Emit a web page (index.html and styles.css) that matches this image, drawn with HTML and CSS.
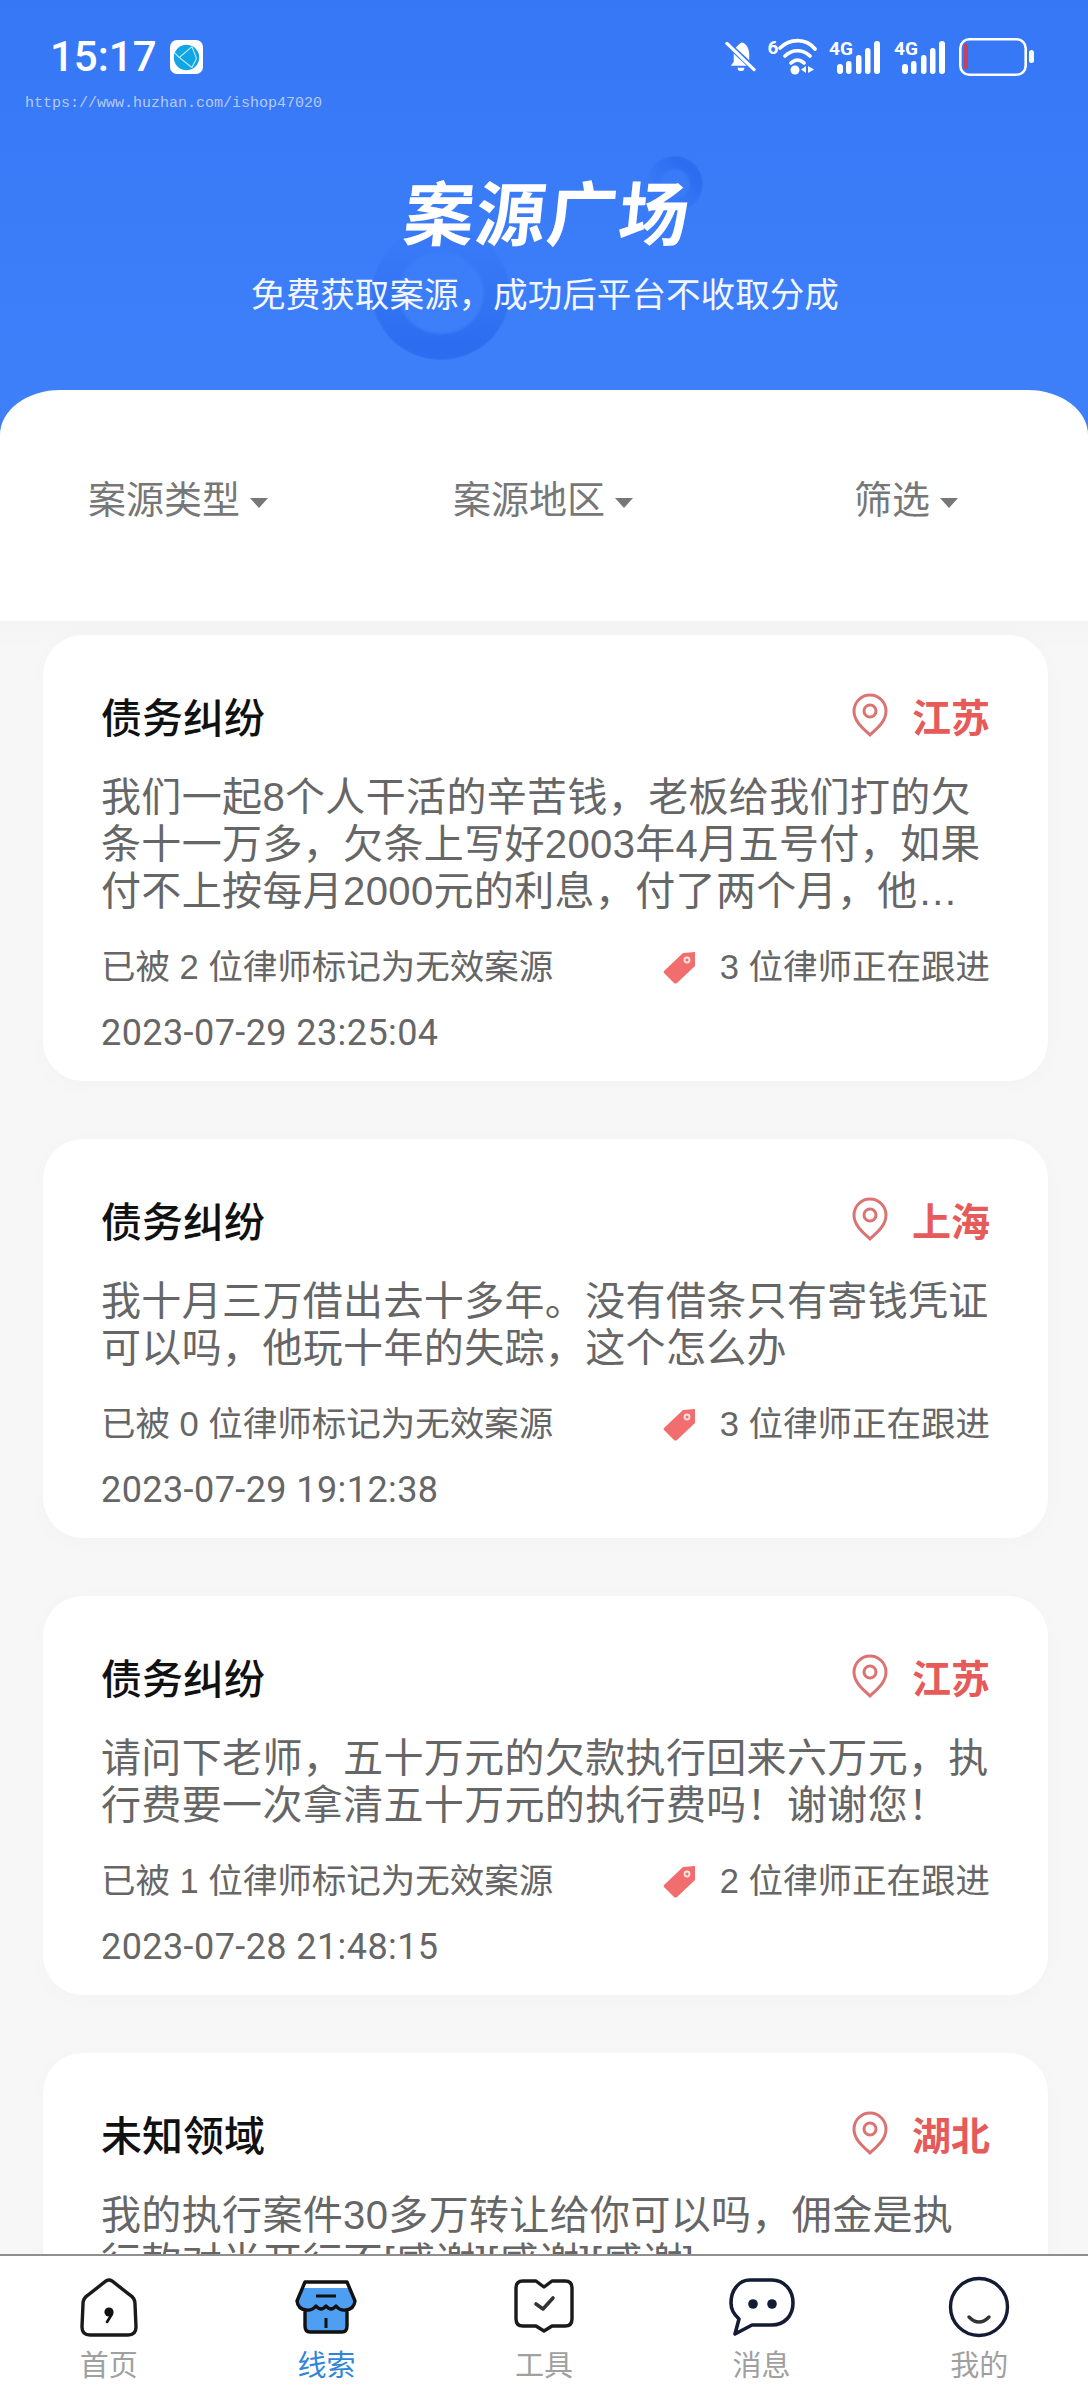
FILE: index.html
```html
<!DOCTYPE html>
<html lang="zh">
<head>
<meta charset="utf-8">
<title>案源广场</title>
<link rel="stylesheet" href="styles.css">
</head>
<body>
<div class="page">
  <header class="hero">
    <span class="ring ring-big"></span>
    <span class="ring ring-small"></span>
    <div class="status">
      <div class="status-left">
        <span class="clock">15:17</span>
        <span class="app-icon">
          <svg viewBox="0 0 32 32" width="29" height="29">
            <circle cx="16" cy="16" r="14" fill="#12a5e6"/>
            <path d="M22 4 L8 16 L22 27 M22 4 L27 17 L22 27 M8 16 L3 11" fill="none" stroke="#bfeaf8" stroke-width="1.2"/>
          </svg>
        </span>
      </div>
      <div class="status-right">
        <svg class="st-bell" viewBox="0 0 32 36" width="31" height="36">
          <path d="M6 27 L9 23 V15 C9 9 13 6 17 3 C22 3 25 10 25 15 V25 L26 27 Z" fill="#fff"/>
          <path d="M13 29 H20 A3.5 3.5 0 0 1 13 29 Z" fill="#fff"/>
          <path d="M3 5 L30 30" stroke="#3677f6" stroke-width="6"/>
          <path d="M2 4 L30 31" stroke="#fff" stroke-width="3.4" stroke-linecap="round"/>
        </svg>
        <svg class="st-wifi" viewBox="0 -4 49 44" width="49" height="44">
          <text x="-0.5" y="15" class="st-six">6</text>
          <path d="M12 9 C22 -1 38 -1 47 10 M17 17 C24 10 35 10 42 17 M23 24 C27 20 32 20 36 24" fill="none" stroke="#fff" stroke-width="3.6" stroke-linecap="round"/>
          <circle cx="27" cy="31" r="4.5" fill="#fff"/>
          <path d="M38 27 V34 L33 30.5 Z M40 27 V34 L46 30.5 Z" fill="#fff"/>
        </svg>
        <svg class="st-signal" viewBox="0 -4 51 44" width="51" height="44">
          <text x="0" y="16" class="st-4g">4G</text>
          <rect x="8" y="25" width="6" height="10" rx="3" fill="#fff"/>
          <rect x="17" y="22" width="5.5" height="13" rx="2.7" fill="#fff"/>
          <rect x="27" y="16" width="5.5" height="19" rx="2.7" fill="#fff"/>
          <rect x="36" y="9" width="5.5" height="26" rx="2.7" fill="#fff"/>
          <rect x="45" y="2" width="6" height="33" rx="3" fill="#fff"/>
        </svg>
        <svg class="st-signal" viewBox="0 -4 51 44" width="51" height="44">
          <text x="0" y="16" class="st-4g">4G</text>
          <rect x="8" y="25" width="6" height="10" rx="3" fill="#fff"/>
          <rect x="17" y="22" width="5.5" height="13" rx="2.7" fill="#fff"/>
          <rect x="27" y="16" width="5.5" height="19" rx="2.7" fill="#fff"/>
          <rect x="36" y="9" width="5.5" height="26" rx="2.7" fill="#fff"/>
          <rect x="45" y="2" width="6" height="33" rx="3" fill="#fff"/>
        </svg>
        <svg class="st-battery" viewBox="0 0 75 38" width="75" height="38">
          <rect x="1.3" y="1.3" width="65.4" height="35.4" rx="9" fill="none" stroke="#fff" stroke-width="2.6"/>
          <rect x="5" y="6" width="4" height="25" fill="#c8405c"/>
          <rect x="70" y="12" width="5" height="13" rx="2.5" fill="#fff"/>
        </svg>
      </div>
    </div>
    <div class="watermark">https://www.huzhan.com/ishop47020</div>
    <h1 class="hero-title"><span>案源广场</span></h1>
    <p class="hero-sub">免费获取案源，成功后平台不收取分成</p>
  </header>

  <section class="filters">
    <div class="filter filter-type">案源类型<i class="caret"></i></div>
    <div class="filter filter-area">案源地区<i class="caret"></i></div>
    <div class="filter filter-more">筛选<i class="caret"></i></div>
  </section>

  <main class="list">
    <article class="card">
      <div class="card-top">
        <h2 class="card-title">债务纠纷</h2>
        <div class="place">
          <svg viewBox="0 0 38 46" width="38" height="46"><path d="M19 43 C13 37 3 30 3 19 A16 16 0 0 1 35 19 C35 30 25 37 19 43 Z" fill="none" stroke="#dc7373" stroke-width="3"/><circle cx="19" cy="19" r="6" fill="none" stroke="#dc7373" stroke-width="3"/></svg>
          <span>江苏</span>
        </div>
      </div>
      <p class="card-text">我们一起8个人干活的辛苦钱，老板给我们打的欠条十一万多，欠条上写好2003年4月五号付，如果付不上按每月2000元的利息，付了两个月，他…</p>
      <div class="card-meta">
        <span>已被 2 位律师标记为无效案源</span>
        <span class="follow">
          <svg viewBox="0 0 36 36" width="36" height="36"><path d="M2 22 L21 4 L33 3 L33 17 L15 34 Q13 35 12 34 L2 24 Q1 23 2 22 Z" fill="#f26d6d"/><circle cx="25" cy="11" r="3.4" fill="#fbe3e3"/><circle cx="25" cy="11" r="1.5" fill="#f26d6d"/></svg>
          3 位律师正在跟进
        </span>
      </div>
      <div class="card-date">2023-07-29 23:25:04</div>
    </article>

    <article class="card">
      <div class="card-top">
        <h2 class="card-title">债务纠纷</h2>
        <div class="place">
          <svg viewBox="0 0 38 46" width="38" height="46"><path d="M19 43 C13 37 3 30 3 19 A16 16 0 0 1 35 19 C35 30 25 37 19 43 Z" fill="none" stroke="#dc7373" stroke-width="3"/><circle cx="19" cy="19" r="6" fill="none" stroke="#dc7373" stroke-width="3"/></svg>
          <span>上海</span>
        </div>
      </div>
      <p class="card-text">我十月三万借出去十多年。没有借条只有寄钱凭证可以吗，他玩十年的失踪，这个怎么办</p>
      <div class="card-meta">
        <span>已被 0 位律师标记为无效案源</span>
        <span class="follow">
          <svg viewBox="0 0 36 36" width="36" height="36"><path d="M2 22 L21 4 L33 3 L33 17 L15 34 Q13 35 12 34 L2 24 Q1 23 2 22 Z" fill="#f26d6d"/><circle cx="25" cy="11" r="3.4" fill="#fbe3e3"/><circle cx="25" cy="11" r="1.5" fill="#f26d6d"/></svg>
          3 位律师正在跟进
        </span>
      </div>
      <div class="card-date">2023-07-29 19:12:38</div>
    </article>

    <article class="card">
      <div class="card-top">
        <h2 class="card-title">债务纠纷</h2>
        <div class="place">
          <svg viewBox="0 0 38 46" width="38" height="46"><path d="M19 43 C13 37 3 30 3 19 A16 16 0 0 1 35 19 C35 30 25 37 19 43 Z" fill="none" stroke="#dc7373" stroke-width="3"/><circle cx="19" cy="19" r="6" fill="none" stroke="#dc7373" stroke-width="3"/></svg>
          <span>江苏</span>
        </div>
      </div>
      <p class="card-text">请问下老师，五十万元的欠款执行回来六万元，执行费要一次拿清五十万元的执行费吗！谢谢您！</p>
      <div class="card-meta">
        <span>已被 1 位律师标记为无效案源</span>
        <span class="follow">
          <svg viewBox="0 0 36 36" width="36" height="36"><path d="M2 22 L21 4 L33 3 L33 17 L15 34 Q13 35 12 34 L2 24 Q1 23 2 22 Z" fill="#f26d6d"/><circle cx="25" cy="11" r="3.4" fill="#fbe3e3"/><circle cx="25" cy="11" r="1.5" fill="#f26d6d"/></svg>
          2 位律师正在跟进
        </span>
      </div>
      <div class="card-date">2023-07-28 21:48:15</div>
    </article>

    <article class="card card-last">
      <div class="card-top">
        <h2 class="card-title">未知领域</h2>
        <div class="place">
          <svg viewBox="0 0 38 46" width="38" height="46"><path d="M19 43 C13 37 3 30 3 19 A16 16 0 0 1 35 19 C35 30 25 37 19 43 Z" fill="none" stroke="#dc7373" stroke-width="3"/><circle cx="19" cy="19" r="6" fill="none" stroke="#dc7373" stroke-width="3"/></svg>
          <span>湖北</span>
        </div>
      </div>
      <p class="card-text">我的执行案件30多万转让给你可以吗，佣金是执行款对半开行不[感谢][感谢][感谢]</p>
    </article>
  </main>

  <nav class="tabbar">
    <a class="tab">
      <svg viewBox="0 0 60 60" width="60" height="60"><path d="M11 58 H49 Q57 58 57 50 L56 27 Q56 21 51 18 L33 4 Q30 2 27 4 L9 18 Q4 21 4 27 L3 50 Q3 58 11 58 Z" fill="#fff" stroke="#1a1a1a" stroke-width="3.4"/><circle cx="30" cy="35" r="4.6" fill="#111"/><path d="M33 37 L28 45" stroke="#111" stroke-width="2.6" stroke-linecap="round"/></svg>
      <span>首页</span>
    </a>
    <a class="tab tab-on">
      <svg viewBox="0 0 64 60" width="64" height="60"><path d="M11 5 H53 L61 24 Q60 31 53 33 V48 Q53 55 48 55 H16 Q11 55 11 48 V33 Q4 31 3 24 Z" fill="#4e9ff1"/><path d="M11 5 H53 L55 11 H9 Z" fill="#fff"/><path d="M11 5 H53 L61 24 Q60 32 52 33 Q46 34 42 29 Q37 35 32 29 Q27 35 22 29 Q18 34 12 33 Q4 32 3 24 Z M11 33 V49 Q11 55 16 55 H48 Q53 55 53 49 V33" fill="none" stroke="#111" stroke-width="3.4" stroke-linejoin="round"/><path d="M22 19 H42 M32 41 V51" stroke="#111" stroke-width="3"/></svg>
      <span>线索</span>
    </a>
    <a class="tab">
      <svg viewBox="0 0 62 60" width="62" height="60"><path d="M10 4 H23 L31 10 L39 4 H52 Q59 4 59 11 V42 Q59 49 52 49 H39 L31 54 L23 49 H10 Q3 49 3 42 V11 Q3 4 10 4 Z" fill="#fff" stroke="#1a1a1a" stroke-width="3.4" stroke-linejoin="round"/><path d="M23 27 L30 32 L40 21" fill="none" stroke="#333" stroke-width="3.6" stroke-linecap="round" stroke-linejoin="round"/></svg>
      <span>工具</span>
    </a>
    <a class="tab">
      <svg viewBox="0 0 68 60" width="68" height="60"><path d="M22 3 H44 C56 3 65 13 65 26 C65 39 56 48 44 48 H24 L7 57 L11 42 C6 37 3 33 3 26 C3 13 11 3 22 3 Z" fill="#fff" stroke="#141b34" stroke-width="3.6" stroke-linejoin="round"/><circle cx="25" cy="27" r="4.8" fill="#141b34"/><circle cx="44" cy="27" r="4.8" fill="#141b34"/></svg>
      <span>消息</span>
    </a>
    <a class="tab">
      <svg viewBox="0 0 62 62" width="62" height="62"><circle cx="31" cy="31" r="28.5" fill="#fff" stroke="#141b34" stroke-width="3.4"/><path d="M21 41 Q31 51 41 41" fill="none" stroke="#333" stroke-width="3.4" stroke-linecap="round"/></svg>
      <span>我的</span>
    </a>
  </nav>
</div>
</body>
</html>
```

FILE: styles.css
```css
* {
  box-sizing: border-box;
}

html, body {
  margin: 0;
  padding: 0;
}

body {
  font-family: "Liberation Sans", "Noto Sans CJK SC", sans-serif;
  background: #f7f7f7;
}

.page {
  position: relative;
  width: 1088px;
  height: 2400px;
  overflow: hidden;
  background: #f7f7f7;
}

/* top blue area */
.hero {
  position: relative;
  height: 440px;
  background: linear-gradient(180deg, #3677f6 0%, #3f80fa 100%);
  overflow: hidden;
}

.ring {
  position: absolute;
  border-style: solid;
  border-color: #2c6df0;
  border-radius: 50%;
  filter: blur(1px);
}

.ring-big {
  left: 372px;
  top: 226px;
  width: 138px;
  height: 134px;
  border-width: 26px;
  -webkit-mask-image: linear-gradient(to top, #000 10%, rgba(0, 0, 0, .15) 85%);
  mask-image: linear-gradient(to top, #000 10%, rgba(0, 0, 0, .15) 85%);
}

.ring-small {
  left: 647px;
  top: 156px;
  width: 56px;
  height: 56px;
  border-width: 13px;
  -webkit-mask-image: linear-gradient(to bottom left, #000 25%, transparent 75%);
  mask-image: linear-gradient(to bottom left, #000 25%, transparent 75%);
}

.status {
  position: relative;
  display: flex;
  justify-content: space-between;
  align-items: center;
  height: 36px;
  margin-top: 39px;
  padding: 0 54px 0 50px;
}

.status-left, .status-right {
  display: flex;
  align-items: center;
}

.clock {
  color: #fff;
  font: 500 42px Roboto, sans-serif;
  line-height: 36px;
}

.app-icon {
  display: flex;
  align-items: center;
  justify-content: center;
  width: 33px;
  height: 34px;
  margin-left: 13px;
  background: #fff;
  border-radius: 7px;
}

.status-right {
  gap: 12px;
}

.st-battery {
  margin-left: 2px;
}

.st-signal + .st-signal {
  margin-left: 2px;
}

.st-six, .st-4g {
  fill: #fff;
  font: 700 19px "Roboto", sans-serif;
}

.watermark {
  position: relative;
  margin: 19px 0 0 25px;
  color: #b7c9f0;
  font: 15px/20px "Liberation Mono", monospace;
}

.hero-title {
  position: relative;
  margin: 54px 0 0;
  padding-left: 8px;
  color: #fff;
  font: 700 70px/84px "Noto Sans CJK SC", sans-serif;
  letter-spacing: 1.5px;
  text-align: center;
}

.hero-title span {
  display: inline-block;
  transform: skewX(-6deg);
}

.hero-sub {
  position: relative;
  margin: 17px 0 0;
  padding-left: 2px;
  color: #f2f6ff;
  font: 400 34.6px/46px "Noto Sans CJK SC", sans-serif;
  text-align: center;
}

/* filter strip */
.filters {
  position: relative;
  height: 231px;
  margin-top: -50px;
  padding-top: 83px;
  display: flex;
  background: #fff;
  border-radius: 60px 60px 0 0 / 45px 45px 0 0;
  color: #777;
  font: 400 38px/48px "Noto Sans CJK SC", sans-serif;
}

.filter {
  display: flex;
  align-items: center;
  height: 48px;
}

.filter-type {
  margin-left: 88px;
}

.filter-area {
  margin-left: 185px;
}

.filter-more {
  margin-left: 221px;
}

.caret {
  width: 0;
  height: 0;
  margin: 12px 0 0 10px;
  border-style: solid;
  border-width: 10px 9px 0;
  border-color: #777 transparent transparent;
}

/* cards */
.list {
  display: flex;
  flex-direction: column;
  gap: 58px;
  padding: 14px 40px 0 43px;
  background: linear-gradient(180deg, #f4f4f4 0, #f7f7f7 30px);
}

.card {
  flex: none;
  padding: 52px 58px 20px;
  background: #fff;
  border-radius: 40px;
  box-shadow: 0 4px 24px rgba(0, 0, 0, .02);
}

.card-last {
  height: 446px;
}

.card-top {
  display: flex;
  justify-content: space-between;
  align-items: center;
  height: 56px;
}

.card-title {
  margin: 0;
  color: #111;
  font: 500 41px/56px "Noto Sans CJK SC", sans-serif;
}

.place {
  display: flex;
  align-items: center;
  gap: 23px;
  color: #e65a5a;
  font: 700 39px/56px "Noto Sans CJK SC", sans-serif;
}

.card-text {
  margin: 31px 0 0;
  color: #666;
  font: 400 40px/47px "Liberation Sans", "Noto Sans CJK SC", sans-serif;
  letter-spacing: .35px;
}

.card-meta {
  display: flex;
  justify-content: space-between;
  align-items: center;
  margin-top: 24px;
  height: 56px;
  color: #666;
  font: 400 34.5px/56px "Liberation Sans", "Noto Sans CJK SC", sans-serif;
}

.follow {
  display: flex;
  align-items: center;
  gap: 22px;
}

.card-date {
  margin-top: 10px;
  color: #666;
  font: 400 36px/56px Roboto, sans-serif;
  letter-spacing: .42px;
}

/* bottom nav */
.tabbar {
  position: absolute;
  left: 0;
  right: 0;
  top: 2254px;
  height: 146px;
  display: flex;
  justify-content: space-between;
  background: #fff;
  border-top: 2px solid #8f8f8f;
}

.tab {
  flex: 1;
  display: flex;
  flex-direction: column;
  align-items: center;
  padding-top: 20px;
  color: #a0a0a0;
  font: 400 29px/40px "Noto Sans CJK SC", sans-serif;
}

.tab svg {
  height: 62px;
  margin-bottom: 5px;
}

.tab-on {
  color: #2f86d8;
}
```
